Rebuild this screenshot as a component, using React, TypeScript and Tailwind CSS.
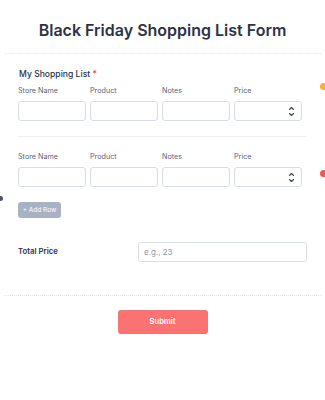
import React from 'react';

const cols = ['Store Name', 'Product', 'Notes', 'Price'];

const Spinner: React.FC = () => (
  <svg width="7" height="11" viewBox="0 0 7 11" fill="none" stroke="#3b4356" strokeWidth="1.1" strokeLinecap="round" strokeLinejoin="round">
    <path d="M1.5 3.5 L3.5 1.5 L5.5 3.5" />
    <path d="M1.5 7.5 L3.5 9.5 L5.5 7.5" />
  </svg>
);

const Row: React.FC = () => (
  <div className="grid grid-cols-[68px_68px_68px_68px] gap-x-[4px]">
    {cols.map((c) => (
      <div key={c} className="text-[7.2px] leading-[12px] text-[#57647e] mb-[4px]">
        {c}
      </div>
    ))}
    {cols.map((c) => (
      <div
        key={c}
        className="h-[20px] rounded-[3px] border border-[#d9dde5] bg-white flex items-center justify-end pr-[6px]"
      >
        {c === 'Price' && <Spinner />}
      </div>
    ))}
  </div>
);

const App: React.FC = () => {
  return (
    <div className="relative w-[325px] h-[400px] bg-white overflow-hidden" style={{ fontFamily: 'Inter, "Noto Sans", sans-serif' }}>
      {/* edge dots */}
      <div className="absolute left-[320px] top-[83px] w-[7px] h-[7px] rounded-full bg-[#fdb022]" />
      <div className="absolute left-[320px] top-[170px] w-[7px] h-[7px] rounded-full bg-[#f2545b]" />
      <div className="absolute -left-[2px] top-[196px] w-[5px] h-[5px] rounded-full bg-[#4b5468]" />

      <div className="mx-[4px] h-[54px] pt-[19px] border-b border-dotted border-[#e3e6ec]">
        <h1 className="text-center text-[16px] leading-[22px] font-semibold text-[#2c3345]">
          Black Friday Shopping List Form
        </h1>
      </div>

      <div className="px-[18px] pt-[13px]">
        <div className="text-[8.6px] leading-[14px] font-medium text-[#2c3345] mb-[4px] pl-[1px]">
          My Shopping List <span className="text-[#f23a3c]">*</span>
        </div>
        <Row />
        <div className="w-[289px] border-b border-[#eef0f4] mt-[15px] mb-[14px]" />
        <Row />
        <button className="mt-[15px] w-[43px] h-[16px] rounded-[3px] bg-[#a9b2c5] text-white text-[6.5px] leading-[16px]">
          + Add Row
        </button>

        <div className="mt-[24px] flex items-center">
          <div className="w-[120px] text-[7.8px] font-semibold text-[#2c3345]">Total Price</div>
          <div className="w-[169px] h-[20px] rounded-[3px] border border-[#d9dde5] flex items-center pl-[5px] text-[8px] text-[#8f96a8]">
            e.g., 23
          </div>
        </div>
      </div>

      <div className="mx-[4px] mt-[33px] border-b border-dotted border-[#e3e6ec]" />

      <div className="flex justify-center pt-[14px]">
        <button className="w-[90px] h-[24px] rounded-[3px] bg-[#fb7272] text-white text-[7.6px] font-semibold">
          Submit
        </button>
      </div>
    </div>
  );
};

export default App;
